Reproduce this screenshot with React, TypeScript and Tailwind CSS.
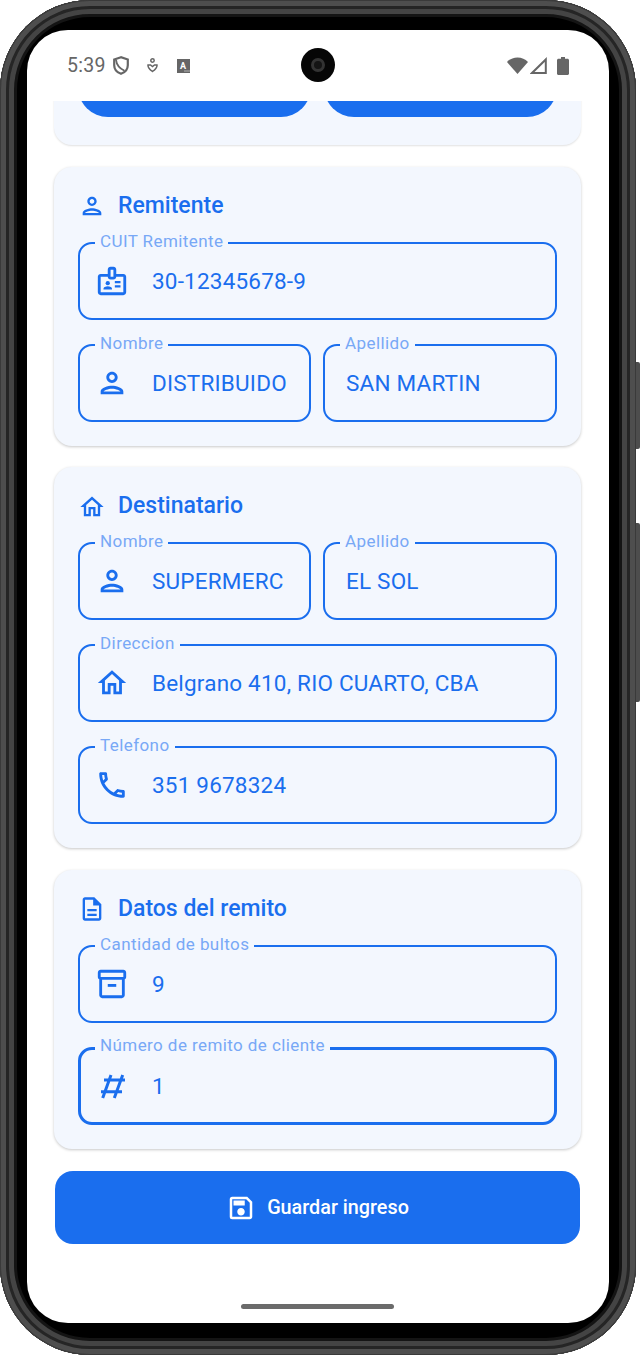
import type { ReactNode } from 'react';
import {
  MdOutlinePerson,
  MdOutlineHome,
  MdOutlineBadge,
  MdOutlineCall,
  MdOutlineDescription,
  MdOutlineInventory2,
  MdOutlineSave,
} from 'react-icons/md';

function HashIcon() {
  return (
    <svg width="34" height="34" viewBox="0 0 34 34" fill="none" stroke="currentColor" strokeWidth="3">
      <path d="M15 6 6.700 29M26.700 6 18.300 29M8 11h21M5 22.700h21" />
    </svg>
  );
}

function Field({
  label,
  value,
  icon,
  focused = false,
  className = '',
}: {
  label: string;
  value: string;
  icon?: ReactNode;
  focused?: boolean;
  className?: string;
}) {
  return (
    <div
      className={`relative h-[78px] flex items-center rounded-[14px] border-[#1a6eee] ${
        focused ? 'border-[3px]' : 'border-2'
      } ${className}`}
    >
      {/* notch in the outline */}
      <span
        className={`absolute ${focused ? '-top-[15px] left-[14px]' : '-top-[13px] left-[15px]'} bg-[#f3f7fe] px-[5px] text-[17px] leading-[20px] tracking-[0.42px] text-[#78a8f6] whitespace-nowrap`}
      >
        {label}
      </span>
      {icon ? (
        <span className={`${focused ? 'w-[71px]' : 'w-[72px]'} shrink-0 flex justify-center pr-[8px] text-[#1a6eee]`}>
          {icon}
        </span>
      ) : (
        <span className="w-[21px] shrink-0" />
      )}
      <span className="pt-[2px] text-[22.5px] tracking-[0.2px] text-[#1a6eee] whitespace-nowrap">{value}</span>
    </div>
  );
}

function Section({ icon, title, children }: { icon: ReactNode; title: string; children: ReactNode }) {
  return (
    <section className="rounded-[18px] bg-[#f3f7fe] px-[24px] pb-[24px] shadow-[0_1px_3px_rgba(0,0,0,0.22)]">
      <header className="h-[75px] pt-[4px] flex items-center gap-[12px] text-[#1a6eee]">
        <span className="w-[28px] flex justify-center">{icon}</span>
        <h2 className="text-[23px] font-medium text-[#1a6eee]">{title}</h2>
      </header>
      <div className="flex flex-col gap-[24px]">{children}</div>
    </section>
  );
}

function StatusBar() {
  return (
    <div className="relative h-[71px] shrink-0 flex items-center justify-between pl-[40px] pr-[40px] text-[#666666]">
      <div className="flex items-center">
        <span className="text-[19.5px] tracking-[0.3px] text-[#666666]">5:39</span>
        <svg className="ml-[7px]" width="16" height="19" viewBox="0 0 16 19" fill="none" stroke="currentColor" strokeWidth="2.200">
          <path d="M8 1.200 1.200 3.500v5.700c0 4 2.800 7.100 6.800 8.600 4-1.500 6.800-4.600 6.800-8.600V3.500L8 1.200Z" />
          <path d="M3 3.800c.5 4.500 3.500 8.500 8.500 11" strokeWidth="1.800" />
        </svg>
        <svg className="ml-[18px]" width="11" height="15" viewBox="0 0 11 15" fill="none" stroke="currentColor" strokeWidth="1.500">
          <circle cx="5.500" cy="2.500" r="1.700" />
          <path d="M1 7h2.500l2 1.500 2-1.500H10c.3 2.300-2.200 4.800-4.500 6.500C3.200 11.800.7 9.300 1 7Z" />
        </svg>
        <svg className="ml-[19px]" width="13" height="14" viewBox="0 0 13 14">
          <rect width="13" height="14" fill="currentColor" />
          <text x="6" y="9.800" fontSize="9" fontWeight="700" fontFamily="Roboto, sans-serif" textAnchor="middle" fill="#ffffff">
            A
          </text>
          <path d="M7.500 12h5" stroke="#ffffff" strokeWidth="1" strokeDasharray="1 1" />
        </svg>
      </div>

      {/* front camera */}
      <div className="absolute left-[274px] top-[18px] w-[34px] h-[34px] rounded-full bg-[#060606] flex items-center justify-center">
        <div className="w-[14px] h-[14px] rounded-full border-[3px] border-[#333333] bg-[#141414]" />
      </div>

      <div className="flex items-center">
        <svg width="21" height="17" viewBox="0 0 21 17" fill="currentColor">
          <path d="M10.500 17 0 5C2.800 2 6.400.500 10.500.500S18.200 2 21 5L10.500 17Z" />
        </svg>
        <svg className="ml-[2px]" width="17" height="17" viewBox="0 0 17 17" fill="none" stroke="currentColor" strokeWidth="2">
          <path d="M15.800 2.500V16H2L15.800 2.500Z" />
        </svg>
        <svg className="ml-[10px]" width="12" height="18" viewBox="0 0 12 18" fill="currentColor">
          <path d="M4 0h4v1.800h2.500c.8 0 1.500.7 1.500 1.500v13.200c0 .8-.7 1.500-1.500 1.500h-9C.7 18 0 17.300 0 16.500V3.300c0-.8.7-1.500 1.500-1.500H4V0Z" />
        </svg>
      </div>
    </div>
  );
}

export default function App() {
  return (
    <div className="relative w-[640px] h-[1355px] bg-white font-['Roboto',sans-serif] overflow-hidden">
      {/* side buttons */}
      <div className="absolute right-0 top-[362px] w-[5px] h-[87px] rounded-r-[2px] bg-[#4d4d4d]" />
      <div className="absolute right-0 top-[523px] w-[5px] h-[179px] rounded-r-[2px] bg-[#4d4d4d]" />

      <div className="relative w-[636px] h-[1355px] rounded-[90px] bg-black pt-[30px] pl-[27px] pr-[27px] pb-[32px] shadow-[inset_0_0_0_1px_#3a3a3a,inset_0_0_0_6px_#4e4e4e,inset_0_0_0_9px_#252525,inset_0_0_0_14px_#444444,inset_0_0_0_17px_#141414]">
        <div className="w-full h-full rounded-[41px] bg-white overflow-hidden flex flex-col">
          <StatusBar />

          <div className="flex-1 min-h-0 overflow-hidden">
            <div className="flex flex-col gap-[21.5px] pl-[27px] pr-[28px] -mt-[60px]">
              {/* end of the card scrolled off the top */}
              <section className="rounded-b-[18px] bg-[#f3f7fe] px-[24px] pb-[28px] shadow-[0_1px_2px_rgba(0,0,0,0.12)]">
                <div className="grid grid-cols-2 gap-[13px]">
                  <div className="h-[76px] rounded-[30px] bg-[#1a6eee]" />
                  <div className="h-[76px] rounded-[30px] bg-[#1a6eee]" />
                </div>
              </section>

              <Section icon={<MdOutlinePerson size={30} />} title="Remitente">
                <Field label="CUIT Remitente" value="30-12345678-9" icon={<MdOutlineBadge size={34} />} />
                <div className="grid grid-cols-[233px_1fr] gap-[12px]">
                  <Field label="Nombre" value="DISTRIBUIDO" icon={<MdOutlinePerson size={34} />} />
                  <Field label="Apellido" value="SAN MARTIN" />
                </div>
              </Section>

              <Section icon={<MdOutlineHome size={30} />} title="Destinatario">
                <div className="grid grid-cols-[233px_1fr] gap-[12px]">
                  <Field label="Nombre" value="SUPERMERC" icon={<MdOutlinePerson size={34} />} />
                  <Field label="Apellido" value="EL SOL" />
                </div>
                <Field label="Direccion" value="Belgrano 410, RIO CUARTO, CBA" icon={<MdOutlineHome size={34} />} />
                <Field label="Telefono" value="351 9678324" icon={<MdOutlineCall size={34} />} />
              </Section>

              <Section icon={<MdOutlineDescription size={30} />} title="Datos del remito">
                <Field label="Cantidad de bultos" value="9" icon={<MdOutlineInventory2 size={34} />} />
                <Field label="Número de remito de cliente" value="1" icon={<HashIcon />} focused />
              </Section>

              <button className="mx-[1px] mt-[1px] h-[73px] rounded-[18px] bg-[#1a6eee] flex items-center justify-center gap-[11px] text-white">
                <MdOutlineSave size={30} />
                <span className="text-[19.8px] font-medium">Guardar ingreso</span>
              </button>
            </div>
          </div>

          {/* gesture bar */}
          <div className="h-0 relative shrink-0">
            <div className="absolute left-[214px] -top-[19px] w-[153px] h-[5px] rounded-full bg-[#6b6b6b]" />
          </div>
        </div>
      </div>
    </div>
  );
}
